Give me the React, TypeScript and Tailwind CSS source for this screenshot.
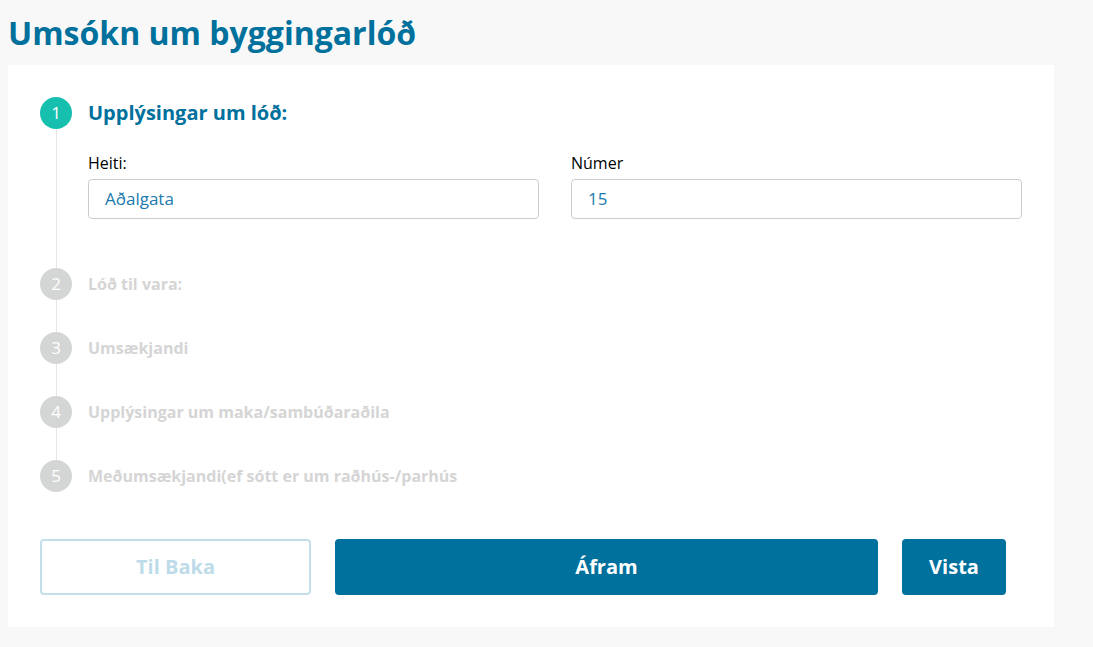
import React from 'react';

const steps = [
  { n: 1, title: 'Upplýsingar um lóð:' },
  { n: 2, title: 'Lóð til vara:' },
  { n: 3, title: 'Umsækjandi' },
  { n: 4, title: 'Upplýsingar um maka/sambúðaraðila' },
  { n: 5, title: 'Meðumsækjandi(ef sótt er um raðhús-/parhús' },
];

function Field({ label, value }: { label: string; value: string }) {
  return (
    <div className="flex flex-col">
      <label className="text-[16px] leading-5 text-black mb-[6px]">{label}</label>
      <div className="h-10 border border-[#cccccc] rounded-sm bg-white flex items-center pl-4 text-[17px] text-[#1b7aae]">
        {value}
      </div>
    </div>
  );
}

export default function App() {
  return (
    <div
      className="min-h-screen bg-[#f8f8f8] px-2 pt-[14px] pb-5"
      style={{ fontFamily: '"Open Sans", "Noto Sans", sans-serif' }}
    >
      <h1 className="text-[32px] leading-[38px] font-bold text-[#00709c] mb-[13px]">
        Umsókn um byggingarlóð
      </h1>

      <div className="w-[1046px] bg-white p-8">
        <div className="flex flex-col">
          {steps.map((step, i) => {
            const active = step.n === 1;
            const last = i === steps.length - 1;
            return (
              <div key={step.n} className="flex gap-4">
                {/* circle + connector line */}
                <div className="flex flex-col items-center w-8 shrink-0">
                  <div
                    className={
                      active
                        ? 'w-8 h-8 rounded-full bg-[#17bfae] text-white flex items-center justify-center text-[17px]'
                        : 'w-8 h-8 rounded-full bg-[#d4d5d5] text-white flex items-center justify-center text-[17px]'
                    }
                  >
                    {step.n}
                  </div>
                  {!last && <div className="w-px flex-1 bg-[#e6e6e6]"></div>}
                </div>

                <div className={active ? 'flex-1 pb-[49px]' : last ? 'flex-1' : 'flex-1 pb-8'}>
                  <div
                    className={
                      active
                        ? 'h-8 flex items-center text-[20px] font-bold text-[#00709c]'
                        : 'h-8 flex items-center text-[16px] font-bold text-[#d5d5d5]'
                    }
                  >
                    {step.title}
                  </div>
                  {active && (
                    <div className="grid grid-cols-2 gap-8 mt-6">
                      <Field label="Heiti:" value="Aðalgata" />
                      <Field label="Númer" value="15" />
                    </div>
                  )}
                </div>
              </div>
            );
          })}
        </div>

        {/* Buttons */}
        <div className="flex gap-6 mt-[47px]">
          <button className="w-[271px] h-14 border-2 border-[#c4dfea] rounded-sm bg-white text-[20px] font-bold text-[#bddbe8]">
            Til Baka
          </button>
          <button className="w-[543px] h-14 rounded-sm bg-[#00709c] text-[20px] font-bold text-white">
            Áfram
          </button>
          <button className="w-[104px] h-14 rounded-sm bg-[#00709c] text-[20px] font-bold text-white">
            Vista
          </button>
        </div>
      </div>
    </div>
  );
}
